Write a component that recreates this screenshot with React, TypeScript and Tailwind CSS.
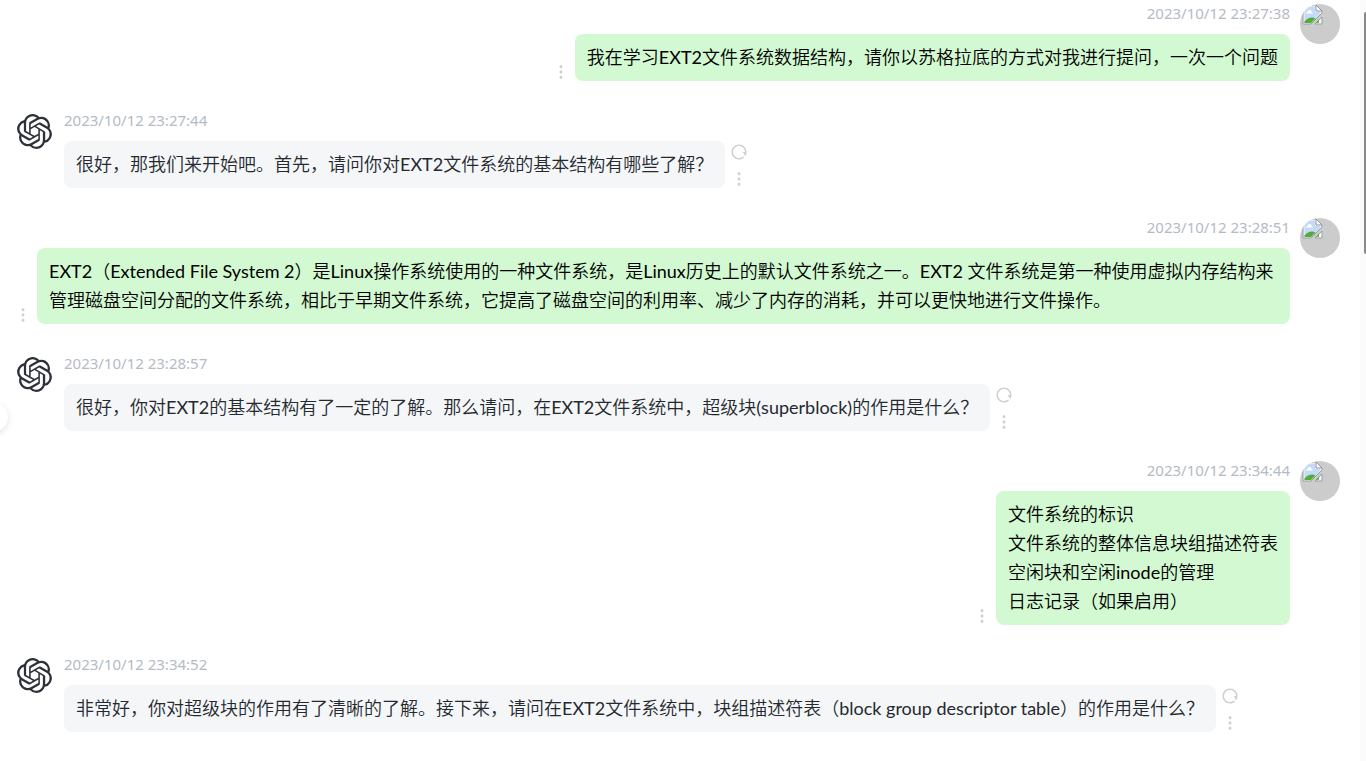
import React from 'react';
import { RiMore2Fill, RiRestartLine } from 'react-icons/ri';
import { SiOpenai } from 'react-icons/si';

interface ChatMessage {
    id: number;
    fromUser: boolean;
    time: string;
    text: string;
    fullWidth?: boolean;
}

const messages: ChatMessage[] = [
    {
        id: 1,
        fromUser: true,
        time: '2023/10/12 23:27:38',
        text: '我在学习EXT2文件系统数据结构，请你以苏格拉底的方式对我进行提问，一次一个问题',
    },
    {
        id: 2,
        fromUser: false,
        time: '2023/10/12 23:27:44',
        text: '很好，那我们来开始吧。首先，请问你对EXT2文件系统的基本结构有哪些了解？',
    },
    {
        id: 3,
        fromUser: true,
        time: '2023/10/12 23:28:51',
        text: 'EXT2（Extended File System 2）是Linux操作系统使用的一种文件系统，是Linux历史上的默认文件系统之一。EXT2 文件系统是第一种使用虚拟内存结构来\n管理磁盘空间分配的文件系统，相比于早期文件系统，它提高了磁盘空间的利用率、减少了内存的消耗，并可以更快地进行文件操作。',
        fullWidth: true,
    },
    {
        id: 4,
        fromUser: false,
        time: '2023/10/12 23:28:57',
        text: '很好，你对EXT2的基本结构有了一定的了解。那么请问，在EXT2文件系统中，超级块(superblock)的作用是什么？',
    },
    {
        id: 5,
        fromUser: true,
        time: '2023/10/12 23:34:44',
        text: '文件系统的标识\n文件系统的整体信息块组描述符表\n空闲块和空闲inode的管理\n日志记录（如果启用）',
    },
    {
        id: 6,
        fromUser: false,
        time: '2023/10/12 23:34:52',
        text: '非常好，你对超级块的作用有了清晰的了解。接下来，请问在EXT2文件系统中，块组描述符表（block group descriptor table）的作用是什么？',
    },
];

// Placeholder shown while the profile picture is missing
const UserAvatar: React.FC = () => (
    <div className="h-10 w-10 shrink-0 overflow-hidden rounded-full bg-[#cccccc]">
        <svg className="ml-0.5" width="21" height="21" viewBox="0 0 21 21" role="img" aria-label="avatar">
            <path d="M1 1H14L20 7V9L9 20H1Z" fill="#f4f7fb" stroke="#999c9f" />
            <path d="M2.5 2.5H13V8H18V10L9 19H2.5Z" fill="#c5dafb" />
            <path d="M4 9.5C4.5 7.5 6 8 6.5 6.5C8 5.5 10 6.5 9.5 8.5C10.5 8.5 11 9 11 9.5Z" fill="#fff" />
            <path d="M2.5 19V17.5C5.5 14 10 12.5 13.5 14.5L9 19Z" fill="#52ad35" />
            <path d="M13 20L20 13V20Z" fill="#f4f7fb" stroke="#999c9f" />
            <path d="M14 18.8L17 15.8V18.8Z" fill="#52ad35" />
            <path d="M14 1V7H20Z" fill="#fff" stroke="#8f9296" />
        </svg>
    </div>
);

const BotAvatar: React.FC = () => (
    <div className="flex h-10 w-10 shrink-0 items-center justify-end pr-0.5 text-[#2e3238]">
        <SiOpenai size={35} />
    </div>
);

const Message: React.FC<{ message: ChatMessage }> = ({ message }) => {
    const { fromUser, time, text, fullWidth } = message;

    return (
        <li className={`flex items-start gap-2.5 ${fromUser ? 'flex-row-reverse' : ''}`}>
            {fromUser ? <UserAvatar /> : <BotAvatar />}
            <div className={`flex min-w-0 flex-1 flex-col ${fromUser ? 'items-end' : 'items-start'}`}>
                <time className="mb-3 font-['Noto_Sans',sans-serif] text-[15px] leading-[18px] text-[#b4bbc4]">{time}</time>
                <div
                    className={`flex max-w-full items-end gap-[5px] ${fromUser ? 'flex-row-reverse' : ''} ${
                        fullWidth ? 'w-full' : ''
                    }`}
                >
                    <div
                        className={`min-w-0 rounded-lg px-3 py-[9px] text-[18px] leading-[29px] whitespace-pre-wrap ${
                            fromUser ? 'bg-[#d2f9d1] text-black' : 'bg-[#f4f6f8] text-[#24292f]'
                        } ${fullWidth ? 'flex-1' : ''}`}
                    >
                        {text}
                    </div>
                    <div className="flex shrink-0 flex-col gap-[9px] text-[#d0d0d0]">
                        {!fromUser && (
                            <button type="button" aria-label="重新生成">
                                <RiRestartLine size={18} />
                            </button>
                        )}
                        <button type="button" aria-label="更多">
                            <RiMore2Fill size={18} />
                        </button>
                    </div>
                </div>
            </div>
        </li>
    );
};

export default function App() {
    return (
        <div className="relative flex h-screen overflow-hidden bg-white font-['Lato','Noto_Sans_CJK_SC_DemiLight','Noto_Sans_CJK_SC',sans-serif]">
            <ul className="flex min-w-0 flex-1 flex-col gap-[30px] pt-1 pr-5 pl-3.5">
                {messages.map((message) => (
                    <Message key={message.id} message={message} />
                ))}
            </ul>

            {/* Scroll track */}
            <div className="flex w-1.5 shrink-0 justify-end bg-[#fbfbfb] pt-3">
                <div className="h-[242px] w-0.5 rounded-l-sm bg-[#888888]" />
            </div>

            {/* Sidebar toggle */}
            <button
                type="button"
                aria-label="展开侧边栏"
                className="absolute top-[402px] -left-[22px] h-[30px] w-[30px] rounded-full bg-white shadow-[0_2px_6px_rgba(0,0,0,0.12)]"
            />
        </div>
    );
}
